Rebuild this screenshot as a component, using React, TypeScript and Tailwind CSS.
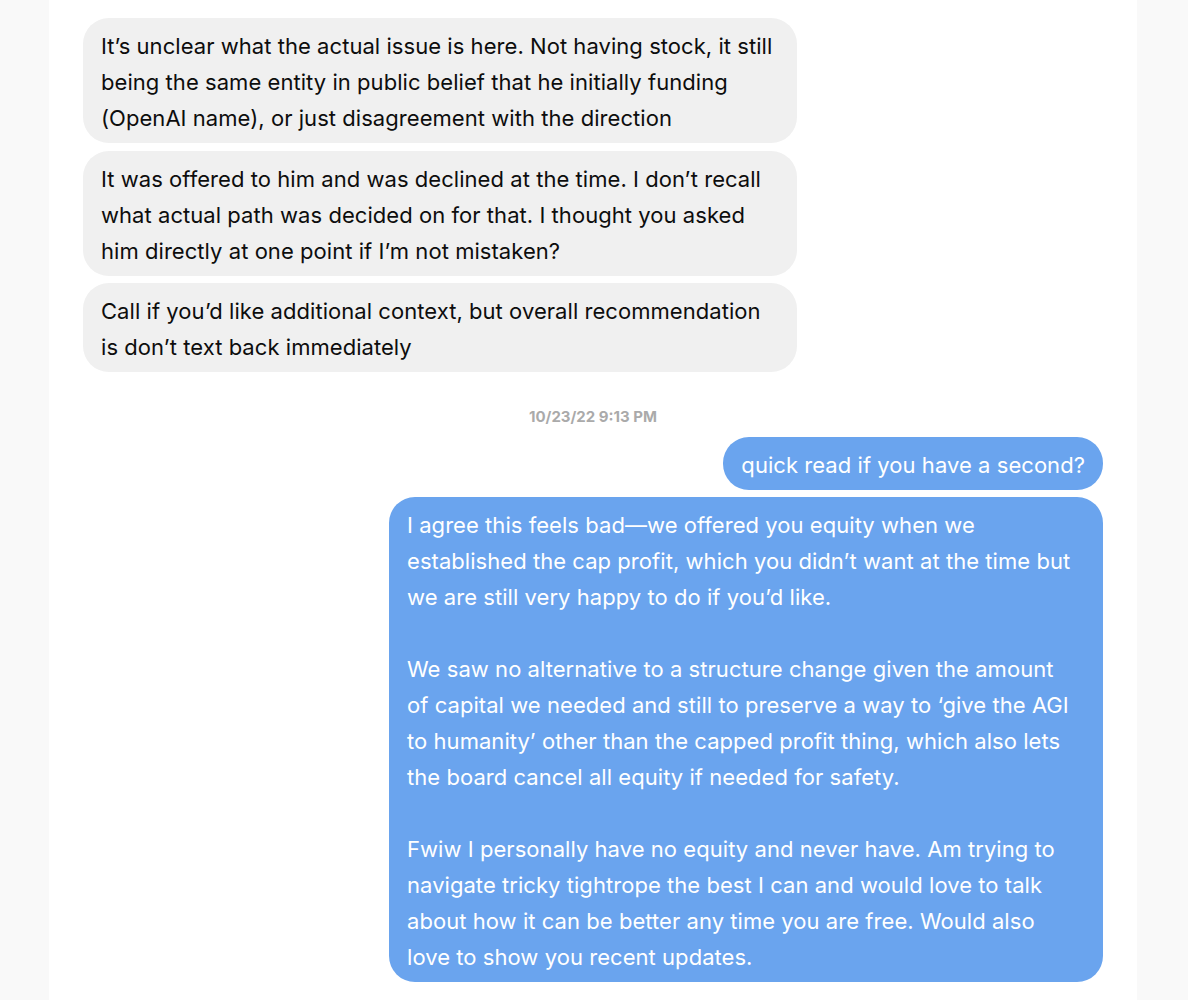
import React from "react";

const Left = ({ children }: { children: React.ReactNode }) => (
  <div className="flex justify-start">
    <div className="w-[714px] rounded-[26px] bg-[#f0f0f0] px-[18px] pt-[10px] pb-[7px] text-[22px] leading-[36px] tracking-[0.05px] text-[#0d0d0d]">
      {children}
    </div>
  </div>
);

const Right = ({ children, wide }: { children: React.ReactNode; wide?: boolean }) => (
  <div className="flex justify-end">
    <div
      className={
        wide
          ? "w-[714px] rounded-[26px] bg-[#6aa4ee] px-[18px] pt-[10px] pb-[7px] text-[22px] leading-[36px] tracking-[0.05px] text-white"
          : "max-w-[714px] rounded-[26px] bg-[#6aa4ee] px-[18px] pt-[10px] pb-[7px] text-[22px] leading-[36px] tracking-[0.05px] text-white"
      }
    >
      {children}
    </div>
  </div>
);

export default function App() {
  return (
    <div className="min-h-[1000px] w-[1188px] bg-[#f9f9f9]" style={{ fontFamily: "Inter, 'Noto Sans', sans-serif" }}>
      <div className="ml-[49px] min-h-[1000px] w-[1088px] bg-white px-[34px] pt-[18px]">
        <div className="flex flex-col gap-[7.5px]">
          <Left>
            It’s unclear what the actual issue is here. Not having stock, it still
            <br />
            being the same entity in public belief that he initially funding
            <br />
            (OpenAI name), or just disagreement with the direction
          </Left>
          <Left>
            It was offered to him and was declined at the time. I don’t recall
            <br />
            what actual path was decided on for that. I thought you asked
            <br />
            him directly at one point if I’m not mistaken?
          </Left>
          <Left>
            Call if you’d like additional context, but overall recommendation
            <br />
            is don’t text back immediately
          </Left>
        </div>
        <div className="mt-[34px] mb-[9px] text-center text-[15px] font-bold leading-[22px] text-[#aaaaaa]">
          10/23/22 9:13 PM
        </div>
        <div className="flex flex-col gap-[7px]">
          <Right>quick read if you have a second?</Right>
          <Right wide>
            <div>
              I agree this feels bad—we offered you equity when we
              <br />
              established the cap profit, which you didn’t want at the time but
              <br />
              we are still very happy to do if you’d like.
            </div>
            <div className="h-[36px]" />
            <div>
              We saw no alternative to a structure change given the amount
              <br />
              of capital we needed and still to preserve a way to ‘give the AGI
              <br />
              to humanity’ other than the capped profit thing, which also lets
              <br />
              the board cancel all equity if needed for safety.
            </div>
            <div className="h-[36px]" />
            <div>
              Fwiw I personally have no equity and never have. Am trying to
              <br />
              navigate tricky tightrope the best I can and would love to talk
              <br />
              about how it can be better any time you are free. Would also
              <br />
              love to show you recent updates.
            </div>
          </Right>
        </div>
      </div>
    </div>
  );
}
